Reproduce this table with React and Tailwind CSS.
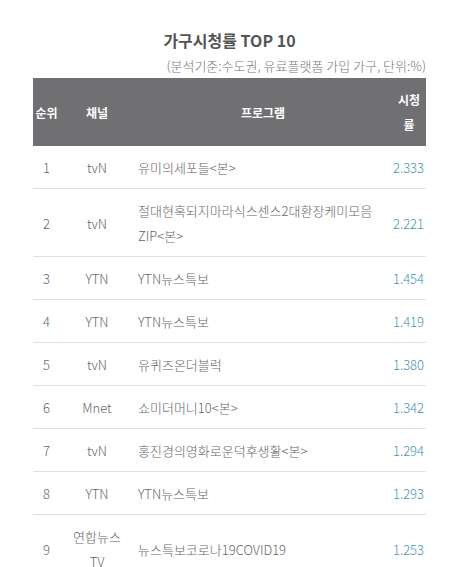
import React from "react";

const rows = [
  ["1", "tvN", ["유미의세포들<본>"], "2.333"],
  ["2", "tvN", ["절대현혹되지마라식스센스2대환장케미모음", "ZIP<본>"], "2.221"],
  ["3", "YTN", ["YTN뉴스특보"], "1.454"],
  ["4", "YTN", ["YTN뉴스특보"], "1.419"],
  ["5", "tvN", ["유퀴즈온더블럭"], "1.380"],
  ["6", "Mnet", ["쇼미더머니10<본>"], "1.342"],
  ["7", "tvN", ["홍진경의영화로운덕후생활<본>"], "1.294"],
  ["8", "YTN", ["YTN뉴스특보"], "1.293"],
  ["9", "연합뉴스 TV", ["뉴스특보코로나19COVID19"], "1.253"],
];

export default function App() {
  return (
    <div
      className="w-[452px] h-[567px] overflow-hidden bg-white"
      style={{ fontFamily: '"Noto Sans CJK KR", "Noto Sans", sans-serif' }}
    >
      <div className="ml-[33px] w-[393px] pt-[28px]">
        <div className="text-center text-[16px] leading-[24px] font-bold text-[#555]">
          가구시청률 TOP 10
        </div>
        <div className="mt-[5px] text-right text-[13px] leading-[18px] font-light text-[#777] whitespace-nowrap">
          (분석기준:수도권, 유료플랫폼 가입 가구, 단위:%)
        </div>
        <div className="mt-[3px] grid grid-cols-[27px_74px_258px_34px] bg-[#707073] text-white text-[12px] leading-[25px] font-bold">
          <div className="py-[9px] flex items-center justify-center">순위</div>
          <div className="py-[9px] flex items-center justify-center">채널</div>
          <div className="py-[9px] flex items-center justify-center">프로그램</div>
          <div className="py-[9px] flex items-center justify-center text-center">
            시청
            <br />
            률
          </div>
        </div>
        {rows.map((r, i) => (
          <div
            key={i}
            className="grid grid-cols-[27px_74px_258px_34px] border-b border-[#e0e0e0] text-[13px] leading-[25px] font-light text-[#666]"
          >
            <div className="pt-[9px] pb-[8px] flex items-center justify-center">{r[0]}</div>
            <div className="pt-[9px] pb-[8px] px-[4px] flex items-center justify-center text-center">
              {r[1] === "연합뉴스 TV" ? (
                <span>
                  연합뉴스
                  <br />
                  TV
                </span>
              ) : (
                r[1]
              )}
            </div>
            <div className="pt-[9px] pb-[8px] pl-[4px] flex flex-col justify-center whitespace-nowrap">
              {r[2].map((t, j) => (
                <span key={j}>{t}</span>
              ))}
            </div>
            <div className="pt-[9px] pb-[8px] pr-[2px] flex items-center justify-end text-[#3f97ad]">{r[3]}</div>
          </div>
        ))}
      </div>
    </div>
  );
}
